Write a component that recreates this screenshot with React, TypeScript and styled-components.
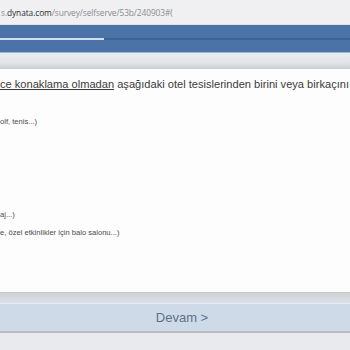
import styled, { createGlobalStyle } from 'styled-components';

const GlobalStyle = createGlobalStyle`
    html, body {
        margin: 0;
        padding: 0;
        width: 350px;
        height: 350px;
        overflow: hidden;
        background: #ffffff;
    }
    #root {
        height: 100%;
    }
`;

const options = [
    'olf, tenis...)',
    '',
    '',
    '',
    '',
    'aj...)',
    'e, özel etkinlikler için balo salonu...)',
];

const App = () => {
    return (
        <Page>
            <GlobalStyle />
            <UrlBar>
                <UrlText>
                    <span>s.</span>
                    <Domain>dynata.com</Domain>
                    /survey/selfserve/53b/240903#(
                </UrlText>
            </UrlBar>
            <Header>
                <Progress>
                    <ProgressFill style={{ width: '104px' }} />
                </Progress>
            </Header>
            <SubHeader />
            <Content>
                <Question>
                    <Underlined>ce konaklama olmadan</Underlined> aşağıdaki otel tesislerinden birini veya birkaçını
                </Question>
                <OptionList>
                    {options.map((text, i) => (
                        <OptionRow key={i}>{text}</OptionRow>
                    ))}
                </OptionList>
            </Content>
            <Footer>
                <FooterBand />
                <NextButton>Devam &gt;</NextButton>
                <FooterBase />
            </Footer>
        </Page>
    );
};

const Page = styled.div`
    display: flex;
    flex-direction: column;
    height: 350px;
    font-family: 'Liberation Sans', Arial, sans-serif;
`;

const UrlBar = styled.div`
    height: 25px;
    display: flex;
    align-items: center;
    background: #f0f0f3;
    border-bottom: 1px solid #e2e2e6;
    box-sizing: border-box;
    overflow: hidden;
`;

const UrlText = styled.div`
    margin-left: 1px;
    font-family: 'Open Sans', sans-serif;
    font-size: 8.4px;
    letter-spacing: -0.1px;
    color: #8c8c90;
    white-space: nowrap;
`;

const Domain = styled.span`
    color: #2e2e32;
`;

const Header = styled.div`
    height: 27px;
    background: #4b73a7;
    border-bottom: 1px solid #9db6cf;
    display: flex;
    align-items: center;
`;

const Progress = styled.div`
    flex: 1;
    height: 2px;
    margin-top: 1px;
    background: #3e6496;
`;

const ProgressFill = styled.div`
    height: 100%;
    background: #cfe0f2;
`;

const SubHeader = styled.div`
    height: 16px;
    background: linear-gradient(#eaedef, #e2e5e8 60%, #c9ced4);
`;

const Content = styled.div`
    flex: 1;
    background: #fefdfe;
    padding-top: 7px;
    overflow: hidden;
`;

const Question = styled.div`
    font-size: 11.1px;
    line-height: 16px;
    color: #3a3a3a;
    white-space: nowrap;
`;

const Underlined = styled.span`
    text-decoration: underline;
`;

const OptionList = styled.div`
    margin-top: 25px;
    display: flex;
    flex-direction: column;
`;

const OptionRow = styled.div`
    height: 18.5px;
    font-size: 7.6px;
    line-height: 10px;
    color: #4a4a4a;
    white-space: nowrap;
`;

const Footer = styled.div`
    display: flex;
    flex-direction: column;
`;

const FooterBand = styled.div`
    height: 10px;
    background: linear-gradient(#cfd2d6, #dcdfe3);
    border-top: 1px solid #c4c7cb;
`;

const NextButton = styled.div`
    height: 27px;
    display: flex;
    align-items: center;
    justify-content: center;
    padding-left: 14px;
    background: #cfdae8;
    border-top: 1px solid #e4ebf4;
    border-bottom: 2px solid #b9bdc2;
    font-size: 13px;
    color: #5b7190;
`;

const FooterBase = styled.div`
    height: 17px;
    background: #e8eaed;
`;

export default App;
